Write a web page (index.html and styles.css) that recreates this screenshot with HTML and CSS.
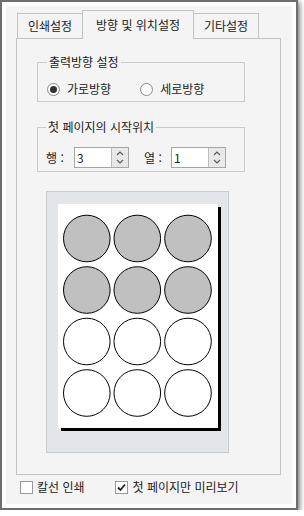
FILE: index.html
```html
<!DOCTYPE html>
<html lang="ko">
<head>
    <meta charset="UTF-8">
    <meta name="viewport" content="width=device-width, initial-scale=1.0">
    <title>인쇄 설정</title>
    <link rel="stylesheet" href="styles.css">
</head>
<body>
    <div class="window">
        <div class="dialog">
            <div class="tabs">
                <div class="tab first">인쇄설정</div>
                <div class="tab active">방향 및 위치설정</div>
                <div class="tab last">기타설정</div>
            </div>

            <div class="panel">
                <fieldset class="group first-group">
                    <legend>출력방향 설정</legend>
                    <div class="radios">
                        <label class="option"><span class="radio checked"></span>가로방향</label>
                        <label class="option"><span class="radio"></span>세로방향</label>
                    </div>
                </fieldset>

                <fieldset class="group second-group">
                    <legend>첫 페이지의 시작위치</legend>
                    <div class="spins">
                        <span class="field-label">행 :</span>
                        <div class="spin">
                            <span class="spin-value">3</span>
                            <span class="spin-btn">
                                <svg width="16" height="19" viewBox="0 0 16 19">
                                    <path d="M5 7 L8 4 L11 7" fill="none" stroke="#5a5a5a" stroke-width="1.2"/>
                                    <path d="M5 12 L8 15 L11 12" fill="none" stroke="#5a5a5a" stroke-width="1.2"/>
                                </svg>
                            </span>
                        </div>
                        <span class="field-label gap">열 :</span>
                        <div class="spin">
                            <span class="spin-value">1</span>
                            <span class="spin-btn">
                                <svg width="16" height="19" viewBox="0 0 16 19">
                                    <path d="M5 7 L8 4 L11 7" fill="none" stroke="#5a5a5a" stroke-width="1.2"/>
                                    <path d="M5 12 L8 15 L11 12" fill="none" stroke="#5a5a5a" stroke-width="1.2"/>
                                </svg>
                            </span>
                        </div>
                    </div>
                </fieldset>

                <div class="preview">
                    <div class="page">
                        <!-- 3 x 4 label sheet, first two rows already used -->
                        <svg width="160" height="224" viewBox="0 0 160 224">
                            <g stroke="#000" stroke-width="1" fill="#c0c0c0">
                                <circle cx="28.8" cy="34.5" r="23.3"/>
                                <circle cx="79.3" cy="34.5" r="23.3"/>
                                <circle cx="130" cy="34.5" r="23.3"/>
                                <circle cx="28.8" cy="86" r="23.3"/>
                                <circle cx="79.3" cy="86" r="23.3"/>
                                <circle cx="130" cy="86" r="23.3"/>
                            </g>
                            <g stroke="#000" stroke-width="1" fill="#fff">
                                <circle cx="28.8" cy="137.5" r="23.3"/>
                                <circle cx="79.3" cy="137.5" r="23.3"/>
                                <circle cx="130" cy="137.5" r="23.3"/>
                                <circle cx="28.8" cy="189" r="23.3"/>
                                <circle cx="79.3" cy="189" r="23.3"/>
                                <circle cx="130" cy="189" r="23.3"/>
                            </g>
                        </svg>
                    </div>
                </div>
            </div>

            <div class="options">
                <label class="check"><span class="box"></span>칼선 인쇄</label>
                <label class="check second">
                    <span class="box">
                        <svg width="11" height="11" viewBox="0 0 11 11">
                            <path d="M2 5.5 L4.5 8 L9 2.5" fill="none" stroke="#222" stroke-width="1.8"/>
                        </svg>
                    </span>첫 페이지만 미리보기
                </label>
            </div>
        </div>
    </div>
</body>
</html>
```

FILE: styles.css
```css
*{
    padding: 0;
    margin: 0;
    box-sizing: border-box;
}
body{
    background-color: #fff;
    font-family: "Noto Sans CJK KR", "Noto Sans", sans-serif;
    font-size: 12px;
    color: #222;
}
.window{
    width: 298px;
    height: 510px;
    border: 2px solid #6e6e6e;
    padding: 4px;
    background-color: #fff;
    box-shadow: 2px 2px 5px rgba(0, 0, 0, 0.5);
}
.dialog{
    height: 100%;
    background-color: #f4f4f4;
    padding-top: 4px;
}

/* tabs */
.tabs{
    display: flex;
    align-items: flex-end;
    height: 28px;
    padding-left: 11px;
}
.tab{
    height: 25px;
    line-height: 23px;
    border: 1px solid #c3c3c3;
    border-bottom: none;
    text-align: center;
    white-space: nowrap;
}
.tab.first{
    width: 65px;
    border-right: none;
}
.tab.last{
    width: 65px;
    border-left: none;
}
.tab.active{
    position: relative;
    z-index: 1;
    width: 112px;
    height: 29px;
    margin-bottom: -1px;
    padding-top: 2px;
    background-color: #f4f4f4;
}

/* tab panel */
.panel{
    width: 265px;
    height: 437px;
    margin-left: 10px;
    border: 1px solid #c3c3c3;
    padding: 15px 0 0 20px;
}
.group{
    width: 208px;
    border: 1px solid #cacaca;
    margin: 0;
}
.group legend{
    padding: 0 2px;
    line-height: 16px;
}
.first-group{
    padding: 0 0 4px 9px;
}
.second-group{
    margin-top: 17px;
    padding: 0 0 3px 8px;
}
.radios{
    display: flex;
    align-items: center;
    margin-top: 11px;
    line-height: 16px;
}
.option{
    display: flex;
    align-items: center;
}
.option:first-child{
    margin-right: 29px;
}
.radio{
    width: 13px;
    height: 13px;
    margin-right: 7px;
    border: 1px solid #8a8a8a;
    border-radius: 50%;
    background-color: #fff;
    display: flex;
    justify-content: center;
    align-items: center;
}
.radio.checked::after{
    content: "";
    width: 7px;
    height: 7px;
    border-radius: 50%;
    background-color: #333;
}

/* spin boxes */
.spins{
    display: flex;
    align-items: center;
    margin-top: 12px;
    height: 21px;
}
.field-label{
    width: 28px;
}
.field-label.gap{
    width: 27px;
    margin-left: 15px;
}
.spin{
    display: flex;
    width: 55px;
    height: 21px;
    border: 1px solid #a6a6a6;
    background-color: #fff;
}
.spin-value{
    flex: 1;
    padding-left: 2px;
    line-height: 19px;
}
.spin-btn{
    width: 17px;
    border-left: 1px solid #bcbcbc;
    background-color: #e9e9e9;
    display: flex;
}

/* preview */
.preview{
    width: 183px;
    height: 262px;
    margin: 19px 0 0 9px;
    border: 1px solid #c9cbcf;
    background-color: #e2e5e9;
    padding: 12px 0 0 11px;
}
.page{
    width: 160px;
    height: 224px;
    background-color: #fff;
    box-shadow: 3px 3px 0 #000;
}
.page svg{
    display: block;
}

/* bottom options */
.options{
    display: flex;
    align-items: center;
    height: 16px;
    margin-top: 4px;
    padding-left: 14px;
    line-height: 16px;
}
.check{
    display: flex;
    align-items: center;
}
.check .box{
    width: 13px;
    height: 13px;
    margin-right: 4px;
    border: 1px solid #999;
    background-color: #fff;
    display: flex;
}
.check.second{
    margin-left: 30px;
}
.check.second .box{
    margin-right: 5px;
}
```
